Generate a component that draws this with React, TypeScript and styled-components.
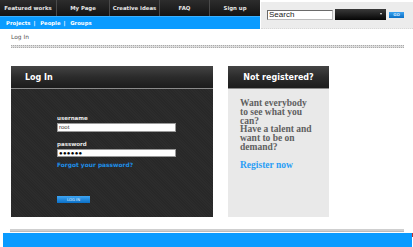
import React from "react";
import styled, { createGlobalStyle } from "styled-components";

const Global = createGlobalStyle`
  html, body { margin: 0; padding: 0; background: #fff; }
  body { width: 413px; height: 247px; overflow: hidden; font-family: "DejaVu Sans", Verdana, sans-serif; }
  * { box-sizing: border-box; }
`;

const Page = styled.div`
  width: 413px;
  height: 247px;
  display: flex;
  flex-direction: column;
`;

const TopRow = styled.div`
  display: flex;
  height: 29px;
  gap: 1px;
`;

const NavColumn = styled.div`
  width: 260px;
  display: flex;
  flex-direction: column;
`;

const NavBar = styled.div`
  height: 16px;
  display: flex;
  background: linear-gradient(#2c2c2c, #141414);
`;

const NavItem = styled.div<{ $w: number; $last?: boolean }>`
  width: ${(p) => p.$w}px;
  display: flex;
  align-items: center;
  justify-content: center;
  color: #e6e6e6;
  font-weight: bold;
  font-size: 5.4px;
  border-right: ${(p) => (p.$last ? "none" : "1px solid #4a4a4a")};
  white-space: nowrap;
`;

const SubBar = styled.div`
  height: 13px;
  background: #0a9bff;
  border-top: 1px solid #3ab0ff;
  display: flex;
  align-items: center;
  padding-left: 6px;
  gap: 3px;
  color: #fff;
  font-weight: bold;
  font-size: 5.3px;
`;

const SearchPanel = styled.div`
  flex: 1;
  margin-top: 2px;
  background: #ececec;
  border-bottom: 1px dotted #d8d8d8;
  display: flex;
  align-items: center;
  padding: 0 0 1px 6px;
`;

const SearchInput = styled.div`
  width: 66px;
  height: 10px;
  background: #fff;
  border: 1px solid #6a6a6a;
  border-right-color: #bbb;
  border-bottom-color: #bbb;
  font-family: "Liberation Sans", Arial, sans-serif;
  font-size: 8px;
  line-height: 8px;
  color: #222;
  padding-left: 1px;
`;

const Select = styled.div`
  width: 51px;
  height: 11px;
  margin-left: 2px;
  background: linear-gradient(#3a3a3a, #050505);
  position: relative;
  &::after {
    content: "";
    position: absolute;
    right: 4px;
    top: 4px;
    border-left: 1.5px solid transparent;
    border-right: 1.5px solid transparent;
    border-top: 2px solid #eee;
  }
`;

const GoButton = styled.div`
  width: 15px;
  height: 6px;
  margin-left: 3px;
  background: linear-gradient(#3aa2f0, #0a6fc4);
  color: #cfe8ff;
  font-size: 4px;
  font-weight: bold;
  display: flex;
  align-items: center;
  justify-content: center;
`;

const Breadcrumb = styled.div`
  margin: 4px 0 0 11px;
  height: 8px;
  font-size: 5.9px;
  line-height: 8px;
  color: #555;
`;

const Divider = styled.div`
  margin: 4px 9px 0 11px;
  height: 3px;
  border-top: 1px dotted #aaa;
  border-bottom: 1px dotted #aaa;
  background: #ddd;
`;

const Main = styled.div`
  display: flex;
  gap: 15px;
  margin: 18px 0 0 11px;
  height: 152px;
`;

const BoxHeader = styled.div<{ $center?: boolean }>`
  height: 23px;
  background: linear-gradient(#444 0%, #2b2b2b 50%, #1c1c1c 100%);
  border-bottom: 1px solid #8a8a8a;
  display: flex;
  align-items: center;
  justify-content: ${(p) => (p.$center ? "center" : "flex-start")};
  padding-left: ${(p) => (p.$center ? 0 : 14)}px;
  color: #fff;
  font-weight: bold;
  font-size: 8px;
`;

const LoginBox = styled.div`
  width: 202px;
  display: flex;
  flex-direction: column;
`;

const LoginBody = styled.div`
  flex: 1;
  background: repeating-linear-gradient(45deg, #282828 0 1px, #2c2c2c 1px 2px);
  padding: 26px 0 0 46px;
  display: flex;
  flex-direction: column;
  align-items: flex-start;
`;

const Label = styled.div<{ $gap?: number }>`
  margin-top: ${(p) => p.$gap ?? 0}px;
  font-size: 5.5px;
  line-height: 6px;
  font-weight: bold;
  color: #e8e8e8;
`;

const Field = styled.div`
  margin-top: 2px;
  width: 119px;
  height: 8.5px;
  background: #fff;
  border: 1px solid #999;
  font-family: "Liberation Sans", Arial, sans-serif;
  font-size: 6px;
  line-height: 6.5px;
  color: #333;
  padding-left: 1px;
  display: flex;
  align-items: center;
`;

const Dots = styled.span`
  font-size: 6px;
  letter-spacing: 0.3px;
  color: #000;
`;

const Forgot = styled.div`
  margin-top: 5px;
  font-size: 5.9px;
  line-height: 6px;
  font-weight: bold;
  color: #1e8ee8;
`;

const LoginButton = styled.div`
  margin-top: 28px;
  width: 33px;
  height: 7px;
  background: linear-gradient(#3ea6f5, #0b6fc6);
  color: #e5f3ff;
  font-size: 3.8px;
  display: flex;
  align-items: center;
  justify-content: center;
`;

const RegisterBox = styled.div`
  width: 101px;
  display: flex;
  flex-direction: column;
`;

const RegisterBody = styled.div`
  flex: 1;
  background: #e9e9e9;
  padding: 10px 0 0 12px;
  font-family: "Liberation Serif", "Times New Roman", serif;
  font-weight: bold;
`;

const Pitch = styled.div`
  font-size: 9.5px;
  line-height: 8.8px;
  color: #606060;
`;

const RegisterLink = styled.div`
  margin-top: 9px;
  font-size: 9.5px;
  line-height: 9px;
  color: #2a9ef5;
`;

const Footer = styled.div`
  margin-top: 12px;
  display: flex;
  flex-direction: column;
`;

const FooterLine = styled.div`
  margin: 0 9px 0 10px;
  height: 3px;
  background: #cfcfcf;
  border-bottom: 1px solid #bbb;
`;

const FooterBar = styled.div`
  margin: 1px 1px 0 3px;
  height: 14px;
  background: #0a9bff;
  position: relative;
  &::after {
    content: "";
    position: absolute;
    right: -1px;
    top: 0;
    width: 1px;
    height: 4px;
    background: #c43030;
  }
`;

const navItems: [string, number][] = [
  ["Featured works", 57],
  ["My Page", 53],
  ["Creative ideas", 50],
  ["FAQ", 50],
  ["Sign up", 50],
];

export default function App() {
  return (
    <>
      <Global />
      <Page>
        <TopRow>
          <NavColumn>
            <NavBar>
              {navItems.map(([t, w], i) => (
                <NavItem key={t} $w={w} $last={i === navItems.length - 1}>
                  {t}
                </NavItem>
              ))}
            </NavBar>
            <SubBar>
              <span>Projects</span>
              <span>|</span>
              <span>&nbsp;People</span>
              <span>|</span>
              <span>&nbsp;Groups</span>
            </SubBar>
          </NavColumn>
          <SearchPanel>
            <SearchInput>Search</SearchInput>
            <Select />
            <GoButton>GO</GoButton>
          </SearchPanel>
        </TopRow>
        <Breadcrumb>Log In</Breadcrumb>
        <Divider />
        <Main>
          <LoginBox>
            <BoxHeader>Log In</BoxHeader>
            <LoginBody>
              <Label>username</Label>
              <Field>root</Field>
              <Label $gap={9}>password</Label>
              <Field>
                <Dots>●●●●●●</Dots>
              </Field>
              <Forgot>Forgot your password?</Forgot>
              <LoginButton>LOG IN</LoginButton>
            </LoginBody>
          </LoginBox>
          <RegisterBox>
            <BoxHeader $center>Not registered?</BoxHeader>
            <RegisterBody>
              <Pitch>
                Want everybody
                <br />
                to see what you
                <br />
                can?
                <br />
                Have a talent and
                <br />
                want to be on
                <br />
                demand?
              </Pitch>
              <RegisterLink>Register now</RegisterLink>
            </RegisterBody>
          </RegisterBox>
        </Main>
        <Footer>
          <FooterLine />
          <FooterBar />
        </Footer>
      </Page>
    </>
  );
}
